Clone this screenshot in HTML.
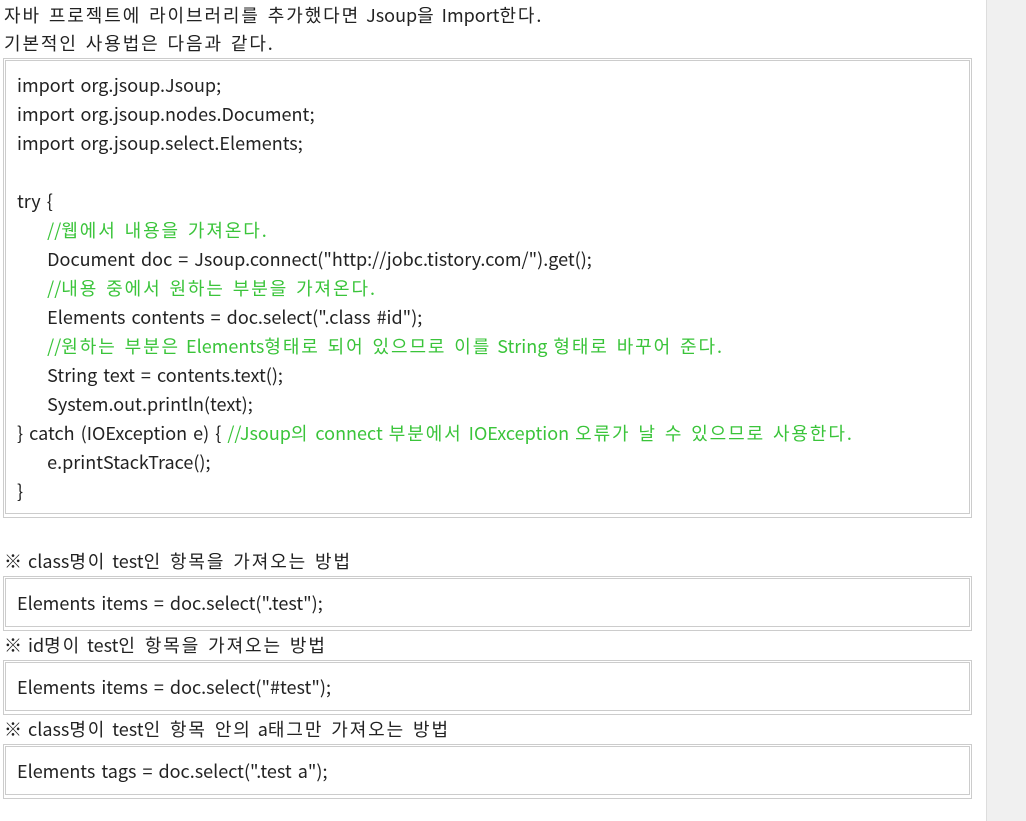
<!DOCTYPE html>
<html><head><meta charset="utf-8"><style>
body{margin:0;width:1026px;height:821px;overflow:hidden;background:#fff;font-family:"Noto Sans CJK KR","Liberation Sans",sans-serif;font-size:18px;color:#222;position:relative;word-spacing:2px}
.side{position:absolute;left:986px;top:0;width:40px;height:821px;background:#f0f0f0;border-left:1px solid #ddd}
.t{position:absolute;left:4px;line-height:28px;white-space:nowrap}
.box{position:absolute;left:3px;width:965px;border:1px solid #ccc;padding:1px}
.in{border:1px solid #ccc;padding:10px 11px;line-height:29px;white-space:pre}
.g{color:#3ac43a}
i{font-style:normal;letter-spacing:1.9px}
a{color:#222}
</style></head><body>
<div class="side"></div>
<div class="t" style="top:1px"><i>자바 프로젝트에 라이브러리를 추가했다면</i> Jsoup<i>을</i> Import<i>한다</i>.<br><i>기본적인 사용법은 다음과 같다</i>.</div>
<div class="box" style="top:58px;height:456px"><div class="in" style="height:432px">import org.jsoup.Jsoup;
import org.jsoup.nodes.Document;
import org.jsoup.select.Elements;

try {
     <span class="g">//<i>웹에서 내용을 가져온다</i>.</span>
     Document doc = Jsoup.connect("<a>http://jobc.tistory.com/</a>").get();
     <span class="g">//<i>내용 중에서 원하는 부분을 가져온다</i>.</span>
     Elements contents = doc.select(".class #id");
     <span class="g">//<i>원하는 부분은</i> Elements<i>형태로 되어 있으므로 이를</i> String <i>형태로 바꾸어 준다</i>.</span>
     String text = contents.text();
     System.out.println(text);
} catch (IOException e) { <span class="g">//Jsoup<i>의</i> connect <i>부분에서</i> IOException <i>오류가 날 수 있으므로 사용한다</i>.</span>
     e.printStackTrace();
}</div></div>
<div class="t" style="top:547px">※ class<i>명이</i> test<i>인 항목을 가져오는 방법</i></div>
<div class="box" style="top:576px;height:51px"><div class="in" style="height:27px">Elements items = doc.select(".test");</div></div>
<div class="t" style="top:631px">※ id<i>명이</i> test<i>인 항목을 가져오는 방법</i></div>
<div class="box" style="top:660px;height:51px"><div class="in" style="height:27px">Elements items = doc.select("#test");</div></div>
<div class="t" style="top:715px">※ class<i>명이</i> test<i>인 항목 안의</i> a<i>태그만 가져오는 방법</i></div>
<div class="box" style="top:744px;height:51px"><div class="in" style="height:27px">Elements tags = doc.select(".test a");</div></div>
</body></html>
